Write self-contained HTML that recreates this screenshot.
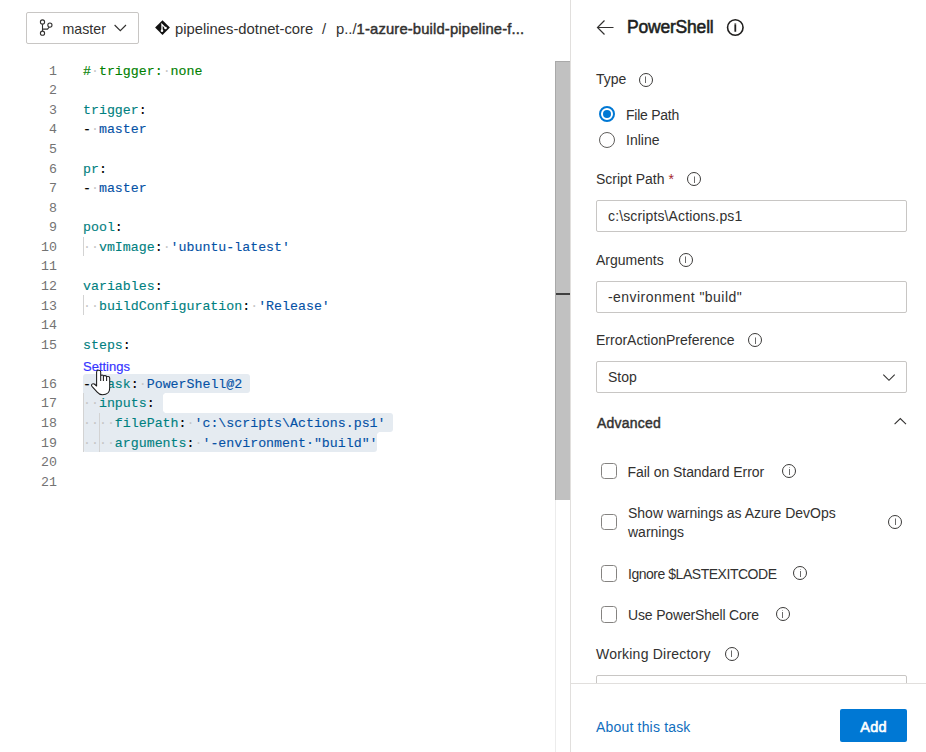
<!DOCTYPE html>
<html><head><meta charset="utf-8">
<style>
*{box-sizing:border-box;margin:0;padding:0}
html,body{width:926px;height:752px;overflow:hidden;background:#fff;font-family:"Liberation Sans",sans-serif;color:#323130}
.abs{position:absolute;white-space:nowrap}
svg{position:absolute;overflow:visible}
#branch{position:absolute;left:26px;top:12px;width:113px;height:32px;border:1px solid #c8c6c4;border-radius:2px}
.crumb{position:absolute;top:21px;font-size:14.8px;white-space:nowrap;color:#323130}
.ln{position:absolute;left:0;width:57px;text-align:right;font-family:"Liberation Mono",monospace;font-size:13.27px;color:#737373;height:19.57px;line-height:19.57px;margin-top:1.3px}
.cl{position:absolute;left:83px;font-family:"Liberation Mono",monospace;font-size:13.27px;white-space:pre;height:19.57px;line-height:19.57px;-webkit-text-stroke:0.12px currentColor;margin-top:1.3px}
.c{color:#008000}.k{color:#008080}.v{color:#0451a5}.p{color:#000}.d{color:#c6c6c6;-webkit-text-stroke:0}
.sel{position:absolute;background:#e5ebf1}
.guide{position:absolute;width:1px;background:#d3d3d3}
#scroll{position:absolute;left:555px;top:61px;width:15px;height:691px;border-left:1px solid #ececec}
#thumb{position:absolute;left:555px;top:61px;width:15px;height:439px;background:#c1c1c1;border-left:1px solid #a9a9a9;border-top:1px solid #a9a9a9}
#panel{position:absolute;left:570px;top:0;width:356px;height:752px;border-left:1px solid #e1dfdd;background:#fff}
.lbl{position:absolute;left:596px;font-size:14px;white-space:nowrap;color:#323130}
.info{position:absolute;width:14px;height:14px;border:1px solid #3b3a39;border-radius:50%}
.info::after{content:"";position:absolute;left:5.5px;top:3.5px;width:1px;height:6px;background:#6a6a6a}
.info::before{content:"";position:absolute;left:5.5px;top:2.3px;width:1px;height:1.2px;background:#b0b0b0}
.inp{position:absolute;left:596px;width:311px;height:32px;border:1px solid #c8c6c4;border-radius:2px;font-size:14px;padding-left:11px;line-height:30px;white-space:nowrap;color:#323130}
.chk{position:absolute;left:600.8px;width:16.6px;height:16.8px;border:1px solid #858381;border-radius:3.5px;margin-top:0.2px}
.radio{position:absolute;left:599px;width:16px;height:16px;border-radius:50%}
</style></head><body>
<!-- header -->
<div id="branch"></div>
<svg style="left:0;top:0" width="926" height="60">
 <g fill="none" stroke="#323130" stroke-width="1.1">
  <circle cx="42.5" cy="22" r="2.1"/>
  <circle cx="42.5" cy="33.2" r="2.1"/>
  <circle cx="49.9" cy="25.1" r="2.1"/>
  <path d="M42.5 24.3V30.9M42.5 29.1H47.5L49.2 27.2"/>
  <path d="M114.6 25L120.3 30.7L126 25" stroke="#323130" stroke-width="1.15"/>
 </g>
</svg>
<div class="abs" style="left:62.5px;top:21px;font-size:14.2px">master</div>
<svg style="left:0;top:0" width="200" height="60">
 <path d="M162.5 20.2L169.9 27.6L162.5 35L155.1 27.6Z" fill="#111"/>
 <path d="M161.2 23.6L165.4 27.9M162 25V30.6" stroke="#fff" stroke-width="1.3" fill="none"/>
 <circle cx="165.5" cy="28" r="1.3" fill="#fff"/>
 <circle cx="162" cy="30.8" r="1.3" fill="#fff"/>
</svg>
<div class="crumb" style="left:175px">pipelines-dotnet-core</div>
<div class="crumb" style="left:322px">/</div>
<div class="crumb" style="left:336px">p../<span style="letter-spacing:0.15px;-webkit-text-stroke:0.45px #323130">1-azure-build-pipeline-f...</span></div>

<!-- editor -->
<div class="sel" style="left:83px;top:373.52px;width:167px;height:19.57px;border-radius:3px 3px 3px 0"></div>
<div class="sel" style="left:83px;top:393.09px;width:80px;height:19.57px"></div>
<div class="sel" style="left:83px;top:412.66px;width:310px;height:19.57px;border-radius:0 3px 3px 0"></div>
<div class="sel" style="left:83px;top:432.23px;width:294px;height:19.57px;border-radius:0 0 3px 3px"></div>
<div class="abs" style="left:163px;top:393.09px;width:3px;height:3px;background:radial-gradient(circle at 100% 100%,#fff 2.6px,#e5ebf1 3.2px)"></div>
<div class="abs" style="left:163px;top:409.66px;width:3px;height:3px;background:radial-gradient(circle at 100% 0%,#fff 2.6px,#e5ebf1 3.2px)"></div>
<div class="abs" style="left:377px;top:432.23px;width:3px;height:3px;background:radial-gradient(circle at 100% 100%,#fff 2.6px,#e5ebf1 3.2px)"></div>
<div class="guide" style="left:83px;top:236.53px;height:19.57px"></div>
<div class="guide" style="left:83px;top:295.24px;height:19.57px"></div>
<div class="guide" style="left:83px;top:393.09px;height:58.71px"></div>
<div class="guide" style="left:99px;top:412.66px;height:39.14px"></div>
<div class="abs" style="left:83px;top:359px;font-size:13px;color:#3333ff;-webkit-text-stroke:0.15px #3333ff">Settings</div>
<div class="ln" style="top:60.4px">1</div>
<div class="cl" style="top:60.4px"><span class="c">#</span><span class="d">·</span><span class="c">trigger:</span><span class="d">·</span><span class="c">none</span></div>
<div class="ln" style="top:79.97px">2</div>
<div class="ln" style="top:99.53999999999999px">3</div>
<div class="cl" style="top:99.53999999999999px"><span class="k">trigger</span><span class="p">:</span></div>
<div class="ln" style="top:119.10999999999999px">4</div>
<div class="cl" style="top:119.10999999999999px"><span class="p">-</span><span class="d">·</span><span class="v">master</span></div>
<div class="ln" style="top:138.67999999999998px">5</div>
<div class="ln" style="top:158.24999999999997px">6</div>
<div class="cl" style="top:158.24999999999997px"><span class="k">pr</span><span class="p">:</span></div>
<div class="ln" style="top:177.81999999999996px">7</div>
<div class="cl" style="top:177.81999999999996px"><span class="p">-</span><span class="d">·</span><span class="v">master</span></div>
<div class="ln" style="top:197.38999999999996px">8</div>
<div class="ln" style="top:216.95999999999995px">9</div>
<div class="cl" style="top:216.95999999999995px"><span class="k">pool</span><span class="p">:</span></div>
<div class="ln" style="top:236.52999999999994px">10</div>
<div class="cl" style="top:236.52999999999994px"><span class="d">··</span><span class="k">vmImage</span><span class="p">:</span><span class="d">·</span><span class="v">&#x27;ubuntu-latest&#x27;</span></div>
<div class="ln" style="top:256.09999999999997px">11</div>
<div class="ln" style="top:275.66999999999996px">12</div>
<div class="cl" style="top:275.66999999999996px"><span class="k">variables</span><span class="p">:</span></div>
<div class="ln" style="top:295.23999999999995px">13</div>
<div class="cl" style="top:295.23999999999995px"><span class="d">··</span><span class="k">buildConfiguration</span><span class="p">:</span><span class="d">·</span><span class="v">&#x27;Release&#x27;</span></div>
<div class="ln" style="top:314.80999999999995px">14</div>
<div class="ln" style="top:334.37999999999994px">15</div>
<div class="cl" style="top:334.37999999999994px"><span class="k">steps</span><span class="p">:</span></div>
<div class="ln" style="top:373.5199999999999px">16</div>
<div class="cl" style="top:373.5199999999999px"><span class="p">-</span><span class="d">·</span><span class="k">task</span><span class="p">:</span><span class="d">·</span><span class="v">PowerShell@2</span></div>
<div class="ln" style="top:393.0899999999999px">17</div>
<div class="cl" style="top:393.0899999999999px"><span class="d">··</span><span class="k">inputs</span><span class="p">:</span></div>
<div class="ln" style="top:412.6599999999999px">18</div>
<div class="cl" style="top:412.6599999999999px"><span class="d">····</span><span class="k">filePath</span><span class="p">:</span><span class="d">·</span><span class="v">&#x27;c:\scripts\Actions.ps1&#x27;</span></div>
<div class="ln" style="top:432.2299999999999px">19</div>
<div class="cl" style="top:432.2299999999999px"><span class="d">····</span><span class="k">arguments</span><span class="p">:</span><span class="d">·</span><span class="v">&#x27;-environment·&quot;build&quot;&#x27;</span></div>
<div class="ln" style="top:451.7999999999999px">20</div>
<div class="ln" style="top:471.3699999999999px">21</div>
<!-- hand cursor -->
<svg style="left:0;top:0" width="200" height="420">
 <path d="M96.6 372Q96.6 370.3 98.65 370.3Q100.7 370.3 100.7 372V376Q100.7 375 102.05 375Q103.4 375 103.4 376.2Q103.4 375.6 105 375.6Q106.6 375.6 106.6 377Q106.6 376.5 108.15 376.5Q109.7 376.5 109.7 378V388Q109.7 394.7 102.5 394.7Q99.2 394.7 97.2 392.2L92.2 386.6Q90.9 385 92.1 384.1Q93.4 383.2 94.9 384.5L96.6 386Z M100.7 376V381M103.4 376.2V381M106.6 377V381" fill="#fff" stroke="#1b1b1b" stroke-width="1.05" stroke-linejoin="round"/>
</svg>
<div id="scroll"></div>
<div id="thumb"></div>
<div class="abs" style="left:556px;top:293px;width:14px;height:2px;background:#404040"></div>

<!-- panel -->
<div id="panel"></div>
<svg style="left:0;top:0" width="926" height="60">
 <path d="M613.5 27.5H597.5M604.5 20.5L597.5 27.5L604.5 34.5" stroke="#323130" stroke-width="1.2" fill="none"/>
 <circle cx="735.3" cy="27.5" r="7.75" stroke="#201f1e" stroke-width="1.6" fill="none"/>
 <path d="M735.3 25.1V31.8M735.3 23.6V24.7" stroke="#201f1e" stroke-width="1.8"/>
</svg>
<div class="abs" style="left:627px;top:17px;font-size:17.5px;color:#201f1e;letter-spacing:-0.2px;-webkit-text-stroke:0.55px #201f1e">PowerShell</div>

<div class="lbl" style="top:71px">Type</div>
<div class="info" style="left:638.5px;top:72.8px"></div>
<div class="radio" style="top:106px;border:2.5px solid #0078d4;background:#fff"></div>
<div class="radio" style="left:603px;width:8px;height:8px;top:110px;background:#0078d4"></div>
<div class="lbl" style="left:626px;top:106.5px;letter-spacing:-0.25px">File Path</div>
<div class="radio" style="top:131.5px;border:1px solid #605e5c"></div>
<div class="lbl" style="left:626px;top:132px">Inline</div>

<div class="lbl" style="top:171px">Script Path <span style="color:#a4262c">*</span></div>
<div class="info" style="left:687px;top:172.4px"></div>
<div class="inp" style="top:200px;letter-spacing:0.13px">c:\scripts\Actions.ps1</div>

<div class="lbl" style="top:251.5px">Arguments</div>
<div class="info" style="left:678.6px;top:252.8px"></div>
<div class="inp" style="top:281px;letter-spacing:0.45px">-environment "build"</div>

<div class="lbl" style="top:332px">ErrorActionPreference</div>
<div class="info" style="left:748px;top:333.4px"></div>
<div class="inp" style="top:361px">Stop</div>
<svg style="left:0;top:0" width="926" height="752">
 <path d="M883.3 374.6L889 380.3L894.7 374.6" stroke="#323130" stroke-width="1.1" fill="none"/>
 <path d="M894.6 424.2L900.3 418.5L906 424.2" stroke="#323130" stroke-width="1.1" fill="none"/>
</svg>
<div class="abs" style="left:597px;top:415px;font-size:14px;letter-spacing:0.2px;-webkit-text-stroke:0.45px #323130">Advanced</div>

<div class="chk" style="top:462.5px"></div>
<div class="lbl" style="left:627.5px;top:463.5px;letter-spacing:-0.05px">Fail on Standard Error</div>
<div class="info" style="left:782px;top:464px"></div>

<div class="chk" style="top:513.5px"></div>
<div class="lbl" style="left:628px;top:503.5px;line-height:19px">Show warnings as Azure DevOps<br>warnings</div>
<div class="info" style="left:888px;top:514.5px"></div>

<div class="chk" style="top:565px"></div>
<div class="lbl" style="left:628px;top:566px;letter-spacing:-0.47px">Ignore $LASTEXITCODE</div>
<div class="info" style="left:793px;top:566px"></div>

<div class="chk" style="top:606px"></div>
<div class="lbl" style="left:628px;top:607px;letter-spacing:-0.16px">Use PowerShell Core</div>
<div class="info" style="left:775.5px;top:607px"></div>

<div class="lbl" style="top:646px;letter-spacing:0.22px">Working Directory</div>
<div class="info" style="left:724.5px;top:646.5px"></div>
<div class="abs" style="left:596px;top:675px;width:311px;height:20px;border:1px solid #c8c6c4;border-radius:2px"></div>

<!-- footer -->
<div class="abs" style="left:571px;top:683px;width:355px;height:69px;background:#fff;border-top:1px solid #e1dfdd"></div>
<div class="abs" style="left:596px;top:719px;font-size:14px;color:#106ebe;letter-spacing:0.18px">About this task</div>
<div class="abs" style="left:840px;top:709px;width:67px;height:33px;background:#0078d4;border-radius:2px;color:#fff;font-size:14.5px;text-align:center;line-height:36px;letter-spacing:0.2px;-webkit-text-stroke:0.6px #fff">Add</div>
</body></html>
